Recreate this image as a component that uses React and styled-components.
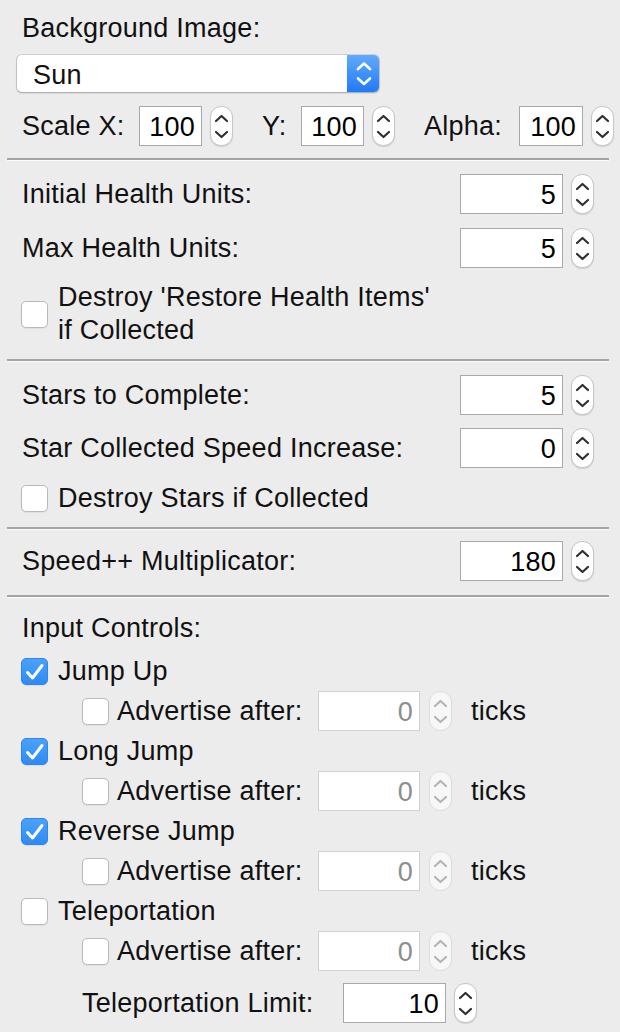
import React from "react";
import styled, { createGlobalStyle } from "styled-components";

const GlobalStyle = createGlobalStyle`
  html, body {
    margin: 0;
    padding: 0;
    background: #ececec;
  }
  body {
    font-family: "Liberation Sans", Arial, sans-serif;
  }
`;

const Panel = styled.div`
  width: 620px;
  height: 1032px;
  overflow: hidden;
  background: #ececec;
  color: #111;
  font-size: 27px;
  letter-spacing: 0.25px;
`;

const Section = styled.section`
  display: flex;
  flex-direction: column;
  padding-top: ${(p) => p.$top}px;
  padding-bottom: ${(p) => p.$bottom}px;
`;

const Separator = styled.div`
  margin-left: 7px;
  width: 602px;
  height: 2px;
  background: #a4a4a4;
  border-bottom: 1px solid #fbfbfb;
`;

const Heading = styled.div`
  height: 30px;
  line-height: 30px;
  padding-left: 22px;
  margin-top: ${(p) => p.$mt || 0}px;
`;

const PopupWrap = styled.div`
  margin: 11px 0 0 16px;
  width: 364px;
  height: 39px;
  box-sizing: border-box;
  display: flex;
  background: #fff;
  border: 1px solid #c2c2c2;
  border-top-color: #cfcfcf;
  border-bottom-color: #b0b0b0;
  border-radius: 6px;
  overflow: hidden;
  box-shadow: 0 1px 1px rgba(0, 0, 0, 0.08);
`;

const PopupValue = styled.div`
  flex: 1;
  display: flex;
  align-items: center;
  padding: 3px 0 0 16px;
`;

const PopupArrows = styled.div`
  width: 33px;
  display: flex;
  align-items: center;
  justify-content: center;
  background: linear-gradient(#62acfd, #1f78f6);
  margin: -1px -1px -1px 0;
`;

const Row = styled.div`
  display: flex;
  align-items: center;
  height: ${(p) => p.$h || 40}px;
  margin-top: ${(p) => p.$mt || 0}px;
  padding-left: ${(p) => p.$indent || 22}px;
  padding-right: 26px;
  justify-content: ${(p) => (p.$spread ? "space-between" : "flex-start")};
`;

const Label = styled.span`
  white-space: nowrap;
  width: ${(p) => (p.$w ? `${p.$w}px` : "auto")};
  margin-left: ${(p) => p.$ml || 0}px;
  flex-shrink: 0;
`;

const SpinnerGroup = styled.div`
  display: flex;
  align-items: center;
  gap: ${(p) => p.$gap || 8}px;
`;

const NumberBox = styled.div`
  width: ${(p) => p.$w}px;
  height: 40px;
  box-sizing: border-box;
  display: flex;
  align-items: center;
  justify-content: flex-end;
  padding: 3px 6px 0 0;
  background: #fff;
  border: 1px solid ${(p) => (p.$disabled ? "#d2d2d2" : "#a9a9a9")};
  color: ${(p) => (p.$disabled ? "#8d8d8d" : "#000")};
`;

const StepperShell = styled.div`
  width: 23px;
  height: 40px;
  box-sizing: border-box;
  border-radius: 11px;
  background: ${(p) => (p.$disabled ? "#f7f7f7" : "#fff")};
  border: 1px solid ${(p) => (p.$disabled ? "#dcdcdc" : "#c6c6c6")};
  box-shadow: ${(p) => (p.$disabled ? "none" : "0 1px 1px rgba(0,0,0,0.12)")};
  display: flex;
  align-items: center;
  justify-content: center;
`;

const CheckRow = styled.label`
  display: flex;
  align-items: center;
  gap: ${(p) => p.$gap || 10}px;
  height: ${(p) => (p.$h ? `${p.$h}px` : "40px")};
  margin-top: ${(p) => p.$mt || 0}px;
  padding-left: ${(p) => p.$indent || 21}px;
`;

const Box = styled.span`
  width: 27px;
  height: 27px;
  box-sizing: border-box;
  flex-shrink: 0;
  border-radius: 5px;
  display: flex;
  align-items: center;
  justify-content: center;
  background: ${(p) => (p.$checked ? "linear-gradient(#4aa2fa, #2f8bf4)" : "#fff")};
  border: 1px solid ${(p) => (p.$checked ? "#2f86ee" : "#b9b9b9")};
  box-shadow: 0 1px 1px rgba(0, 0, 0, 0.06);
`;

const WrapText = styled.span`
  line-height: 33px;
`;

function Stepper({ disabled }) {
  const c = disabled ? "#b4b4b4" : "#2f2f2f";
  return (
    <StepperShell $disabled={disabled}>
      <svg width="21" height="38" viewBox="1 1 21 38">
        <path d="M6 15 L11.5 10 L17 15" fill="none" stroke={c} strokeWidth="2.2" strokeLinecap="round" strokeLinejoin="round" />
        <path d="M6 26 L11.5 31 L17 26" fill="none" stroke={c} strokeWidth="2.2" strokeLinecap="round" strokeLinejoin="round" />
      </svg>
    </StepperShell>
  );
}

function Spinner({ value, w = 103, disabled, gap }) {
  return (
    <SpinnerGroup $gap={gap}>
      <NumberBox $w={w} $disabled={disabled}>{value}</NumberBox>
      <Stepper disabled={disabled} />
    </SpinnerGroup>
  );
}

function Checkbox({ checked }) {
  return (
    <Box $checked={checked}>
      {checked && (
        <svg width="27" height="27" viewBox="0 0 27 27" style={{ margin: -1 }}>
          <path d="M6.5 14.5 L11.5 20 L21 7.5" fill="none" stroke="#fff" strokeWidth="3" strokeLinecap="round" strokeLinejoin="round" />
        </svg>
      )}
    </Box>
  );
}

function ValueRow({ label, value, mt }) {
  return (
    <Row $spread $mt={mt}>
      <Label>{label}</Label>
      <Spinner value={value} />
    </Row>
  );
}

function Control({ name, checked }) {
  return (
    <>
      <CheckRow>
        <Checkbox checked={checked} />
        <span>{name}</span>
      </CheckRow>
      <Row $indent={82}>
        <Checkbox />
        <Label $w={201} $ml={8}>Advertise after:</Label>
        <Spinner value="0" w={102} disabled gap={9} />
        <Label $ml={19}>ticks</Label>
      </Row>
    </>
  );
}

export default function App() {
  const controls = [
    { name: "Jump Up", checked: true },
    { name: "Long Jump", checked: true },
    { name: "Reverse Jump", checked: true },
    { name: "Teleportation", checked: false },
  ];

  return (
    <>
      <GlobalStyle />
      <Panel>
        <Section $top={13} $bottom={12}>
          <Heading>Background Image:</Heading>
          <PopupWrap>
            <PopupValue>Sun</PopupValue>
            <PopupArrows>
              <svg width="20" height="30" viewBox="0 0 20 30">
                <path d="M4 10 L10 4.5 L16 10" fill="none" stroke="#fff" strokeWidth="2.6" strokeLinecap="round" strokeLinejoin="round" />
                <path d="M4 19.5 L10 25 L16 19.5" fill="none" stroke="#fff" strokeWidth="2.6" strokeLinecap="round" strokeLinejoin="round" />
              </svg>
            </PopupArrows>
          </PopupWrap>
          <Row $mt={13}>
            <Label $w={117}>Scale X:</Label>
            <Spinner value="100" w={63} />
            <Label $w={39} $ml={29}>Y:</Label>
            <Spinner value="100" w={63} />
            <Label $w={95} $ml={29}>Alpha:</Label>
            <Spinner value="100" w={64} />
          </Row>
        </Section>
        <Separator />

        <Section $top={13} $bottom={12}>
          <ValueRow label="Initial Health Units:" value="5" />
          <ValueRow label="Max Health Units:" value="5" mt={14} />
          <CheckRow $h={66} $mt={13}>
            <Checkbox />
            <WrapText>
              Destroy 'Restore Health Items'
              <br />
              if Collected
            </WrapText>
          </CheckRow>
        </Section>
        <Separator />

        <Section $top={13} $bottom={9}>
          <ValueRow label="Stars to Complete:" value="5" />
          <ValueRow label="Star Collected Speed Increase:" value="0" mt={13} />
          <CheckRow $mt={10}>
            <Checkbox />
            <span>Destroy Stars if Collected</span>
          </CheckRow>
        </Section>
        <Separator />

        <Section $top={11} $bottom={14}>
          <ValueRow label="Speed++ Multiplicator:" value="180" />
        </Section>
        <Separator />

        <Section $top={15} $bottom={0}>
          <Heading>Input Controls:</Heading>
          <div style={{ height: 8 }} />
          {controls.map((c) => (
            <Control key={c.name} name={c.name} checked={c.checked} />
          ))}
          <Row $indent={82} $mt={12}>
            <Label $w={261}>Teleportation Limit:</Label>
            <Spinner value="10" />
          </Row>
        </Section>
      </Panel>
    </>
  );
}
